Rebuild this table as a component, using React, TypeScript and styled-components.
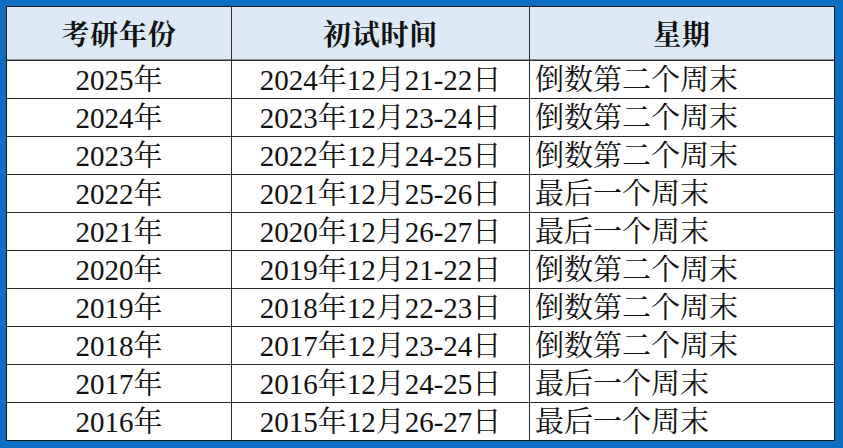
import React from "react";
import styled, { createGlobalStyle } from "styled-components";

const Global = createGlobalStyle`
  html, body { margin: 0; padding: 0; background: #ffffff; }
  * { box-sizing: border-box; }
`;

const Frame = styled.div`
  width: 843px;
  height: 448px;
  background: #0b6ec3;
  padding: 6px 8px 7px 6px;
`;

const Grid = styled.div`
  display: grid;
  grid-template-columns: 224px 297px 304px;
  grid-template-rows: 53px repeat(10, 37px);
  gap: 1px;
  background: #2a2a2a;
  border: 1px solid #1a1a1a;
  font-family: "Liberation Serif", "Noto Serif CJK SC", "Noto Sans CJK SC", serif;
  color: #111;
`;

const HeadCell = styled.div`
  background: #dde9f5;
  display: flex;
  align-items: center;
  justify-content: center;
  font-family: "Noto Serif CJK SC", "Noto Sans CJK SC", serif;
  font-weight: 700;
  font-size: 28px;
  letter-spacing: 0.7px;
  border-bottom: 1px solid #8a8a8a;
`;

const Cell = styled.div<{ $left?: boolean }>`
  background: #ffffff;
  display: flex;
  align-items: center;
  justify-content: ${(p) => (p.$left ? "flex-start" : "center")};
  padding-left: ${(p) => (p.$left ? "5px" : "0")};
  padding-top: 1px;
  font-size: 29px;
  line-height: 1;
  white-space: nowrap;
`;

const rows: [string, string, string][] = [
  ["2025年", "2024年12月21-22日", "倒数第二个周末"],
  ["2024年", "2023年12月23-24日", "倒数第二个周末"],
  ["2023年", "2022年12月24-25日", "倒数第二个周末"],
  ["2022年", "2021年12月25-26日", "最后一个周末"],
  ["2021年", "2020年12月26-27日", "最后一个周末"],
  ["2020年", "2019年12月21-22日", "倒数第二个周末"],
  ["2019年", "2018年12月22-23日", "倒数第二个周末"],
  ["2018年", "2017年12月23-24日", "倒数第二个周末"],
  ["2017年", "2016年12月24-25日", "最后一个周末"],
  ["2016年", "2015年12月26-27日", "最后一个周末"],
];

export default function App() {
  return (
    <>
      <Global />
      <Frame>
        <Grid>
          <HeadCell>考研年份</HeadCell>
          <HeadCell>初试时间</HeadCell>
          <HeadCell>星期</HeadCell>
          {rows.map((r) => (
            <React.Fragment key={r[0]}>
              <Cell>{r[0]}</Cell>
              <Cell>{r[1]}</Cell>
              <Cell $left>{r[2]}</Cell>
            </React.Fragment>
          ))}
        </Grid>
      </Frame>
    </>
  );
}
